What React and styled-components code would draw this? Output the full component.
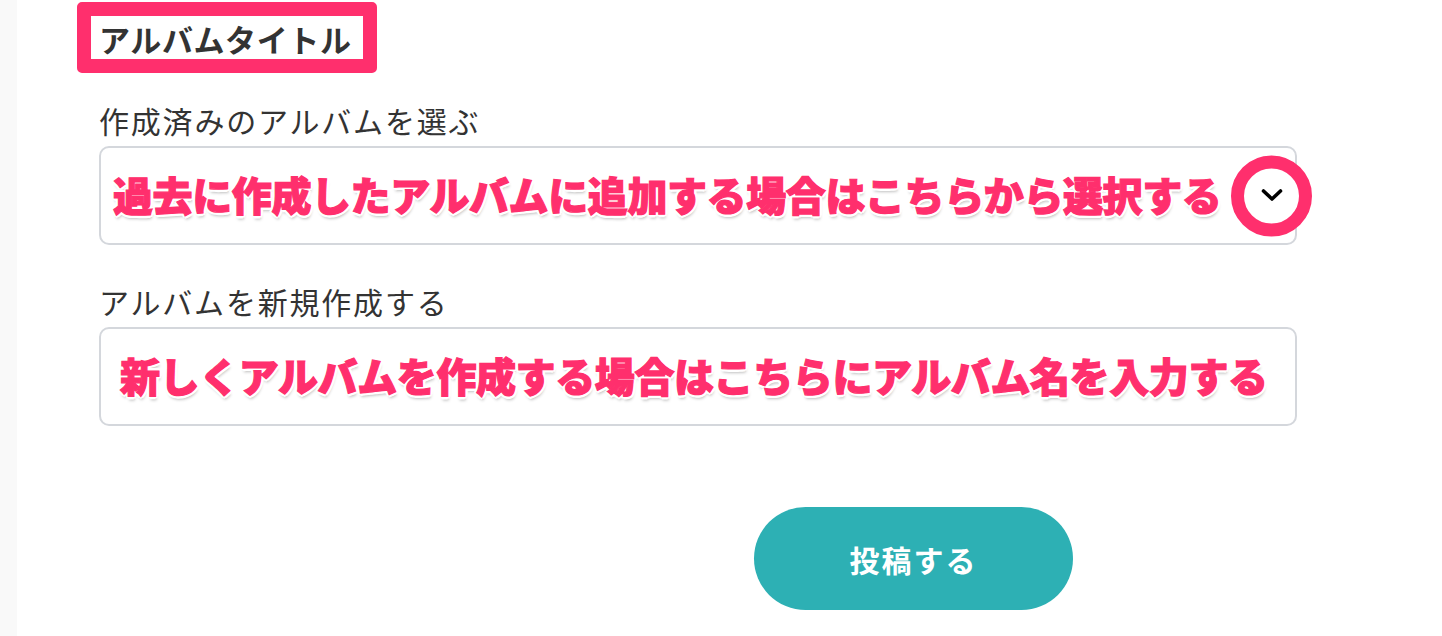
import React from "react";
import styled, { createGlobalStyle } from "styled-components";

const GlobalStyle = createGlobalStyle`
  html, body {
    margin: 0;
    padding: 0;
    background: #ffffff;
  }
  body {
    font-family: "Noto Sans CJK JP", "Noto Sans", sans-serif;
    color: #333333;
  }
`;

const Page = styled.div`
  display: flex;
  min-height: 636px;
`;

const SideStrip = styled.div`
  width: 17px;
  flex-shrink: 0;
  background: #f9f9f9;
`;

const Main = styled.main`
  flex: 1;
  padding: 2px 0 0 60px;
`;

const Heading = styled.h2`
  display: inline-block;
  box-sizing: border-box;
  margin: 0;
  height: 71px;
  padding: 3px 11px 0 8px;
  border: 14px solid #ff2f6d;
  border-radius: 5px;
  font-size: 31px;
  line-height: 40px;
  font-weight: 700;
  letter-spacing: 0.6px;
  color: #333333;
`;

const Form = styled.div`
  width: 1198px;
  margin: 26px 0 0 22px;
  display: flex;
  flex-direction: column;
`;

const Label = styled.label`
  display: block;
  font-size: 30px;
  line-height: 42px;
  letter-spacing: 1.8px;
  font-weight: 400;
  color: #333333;
  margin-top: ${(p) => p.$gap || 0}px;
`;

const Field = styled.div`
  position: relative;
  box-sizing: border-box;
  height: 99px;
  margin-top: 5px;
  border: 2px solid #d4d7dc;
  border-radius: 10px;
  display: flex;
  align-items: center;
  padding-left: ${(p) => p.$pad}px;
  padding-bottom: 4px;
`;

const Hint = styled.span`
  font-size: 40px;
  font-weight: 900;
  letter-spacing: -0.4px;
  color: #ff2f6d;
  white-space: nowrap;
  -webkit-text-stroke: 1.2px #ff2f6d;
  text-shadow:
    -2px -2px 0 #fff, 2px -2px 0 #fff, -2px 2px 0 #fff, 2px 2px 0 #fff,
    0 -3px 0 #fff, 0 3px 0 #fff, -3px 0 0 #fff, 3px 0 0 #fff,
    1px 4px 3px rgba(0, 0, 0, 0.25);
`;

const ArrowRing = styled.div`
  position: absolute;
  right: -17px;
  top: 50%;
  transform: translateY(-50%);
  box-sizing: border-box;
  width: 81px;
  height: 81px;
  border: 13px solid #ff2f6d;
  border-radius: 50%;
  background: #ffffff;
  display: flex;
  align-items: center;
  justify-content: center;
`;

const SubmitButton = styled.button`
  align-self: flex-start;
  margin: 81px 0 0 655px;
  width: 319px;
  height: 103px;
  border: none;
  border-radius: 52px;
  background: #2db0b4;
  color: #ffffff;
  font-family: "Noto Sans CJK JP", "Noto Sans", sans-serif;
  font-size: 30px;
  font-weight: 700;
  letter-spacing: 2px;
  cursor: pointer;
`;

const Chevron = () => (
  <svg width="22" height="14" viewBox="0 0 22 14">
    <path
      d="M2.5 2.5 L11 10.5 L19.5 2.5"
      fill="none"
      stroke="#000"
      strokeWidth="3.6"
      strokeLinecap="round"
      strokeLinejoin="round"
    />
  </svg>
);

export default function App() {
  return (
    <>
      <GlobalStyle />
      <Page>
        <SideStrip />
        <Main>
          <Heading>アルバムタイトル</Heading>
          <Form>
            <Label>作成済みのアルバムを選ぶ</Label>
            <Field $pad={12}>
              <Hint>過去に作成したアルバムに追加する場合はこちらから選択する</Hint>
              <ArrowRing>
                <Chevron />
              </ArrowRing>
            </Field>
            <Label $gap={35}>アルバムを新規作成する</Label>
            <Field $pad={19}>
              <Hint>新しくアルバムを作成する場合はこちらにアルバム名を入力する</Hint>
            </Field>
            <SubmitButton>投稿する</SubmitButton>
          </Form>
        </Main>
      </Page>
    </>
  );
}
